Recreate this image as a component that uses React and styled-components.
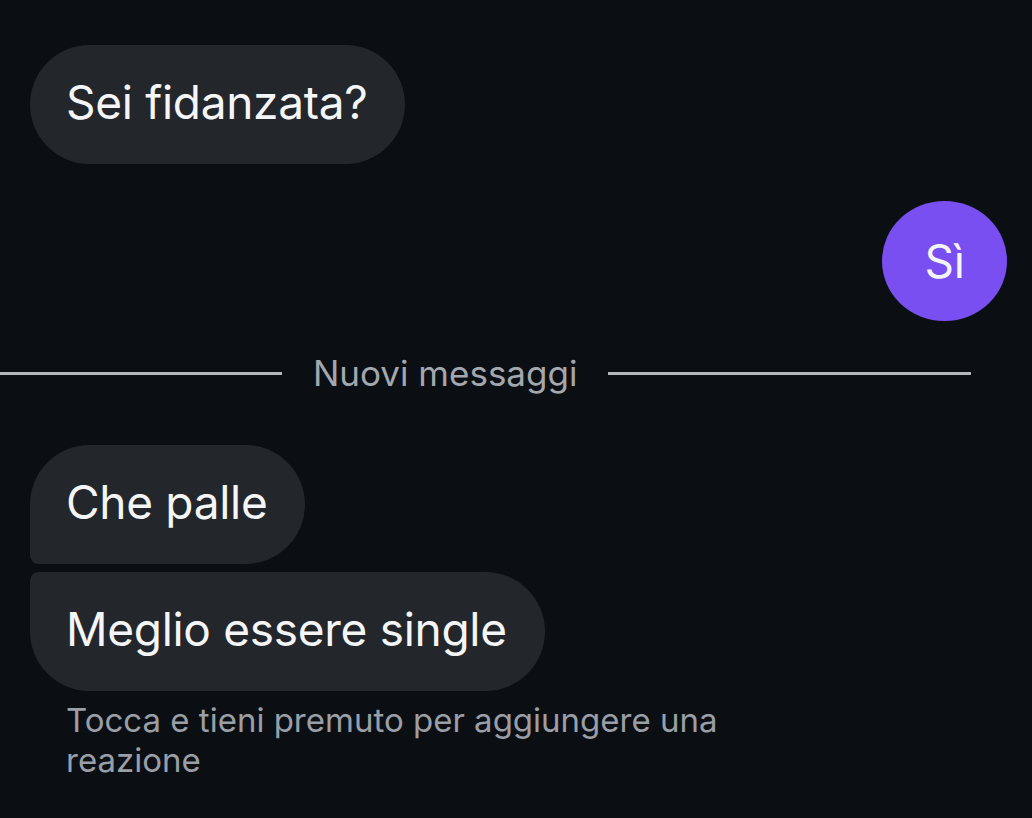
import React from "react";
import styled, { createGlobalStyle } from "styled-components";

const GlobalStyle = createGlobalStyle`
  html, body {
    margin: 0;
    padding: 0;
    background: #0b0f14;
  }
  body {
    font-family: Inter, "Noto Sans", "Liberation Sans", sans-serif;
    -webkit-font-smoothing: antialiased;
  }
`;

const Screen = styled.div`
  width: 1032px;
  height: 818px;
  overflow: hidden;
  background: #0b0f14;
  display: flex;
  flex-direction: column;
  padding-top: 45px;
  box-sizing: border-box;
`;

const Row = styled.div`
  display: flex;
  justify-content: ${(p) => (p.$mine ? "flex-end" : "flex-start")};
  padding: 0 25px 0 30px;
  margin-top: ${(p) => p.$top || 0}px;
`;

const Bubble = styled.div`
  height: 119px;
  box-sizing: border-box;
  display: flex;
  align-items: center;
  padding: 0 38px 5px 36px;
  background: ${(p) => (p.$mine ? "#7a4ff2" : "#23262b")};
  color: #f4f5f7;
  font-size: 46px;
  letter-spacing: -0.3px;
  border-radius: ${(p) => p.$radius || "60px"};
  white-space: nowrap;
`;

const RoundBubble = styled(Bubble)`
  width: 125px;
  height: 120px;
  padding: 0;
  justify-content: center;
  border-radius: 50%;
`;

const Divider = styled.div`
  display: flex;
  align-items: center;
  margin-top: 30px;
  padding-right: 61px;
  gap: 31px;
  height: 44px;
`;

const Line = styled.div`
  height: 3px;
  background: #b4b7bd;
  width: ${(p) => (p.$grow ? "auto" : "282px")};
  flex: ${(p) => (p.$grow ? 1 : "none")};
`;

const DividerLabel = styled.span`
  color: #a3a7ae;
  font-size: 35px;
`;

const Hint = styled.p`
  margin: 9px 0 0 66px;
  max-width: 700px;
  color: #9a9ea6;
  font-size: 33px;
  line-height: 40px;
`;

export default function App() {
  return (
    <>
      <GlobalStyle />
      <Screen>
        <Row>
          <Bubble>Sei fidanzata?</Bubble>
        </Row>
        <Row $mine $top={37}>
          <RoundBubble $mine>Sì</RoundBubble>
        </Row>
        <Divider>
          <Line />
          <DividerLabel>Nuovi messaggi</DividerLabel>
          <Line $grow />
        </Divider>
        <Row $top={50}>
          <Bubble $radius="60px 60px 60px 9px">Che palle</Bubble>
        </Row>
        <Row $top={8}>
          <Bubble $radius="9px 60px 60px 60px">Meglio essere single</Bubble>
        </Row>
        <Hint>Tocca e tieni premuto per aggiungere una reazione</Hint>
      </Screen>
    </>
  );
}
